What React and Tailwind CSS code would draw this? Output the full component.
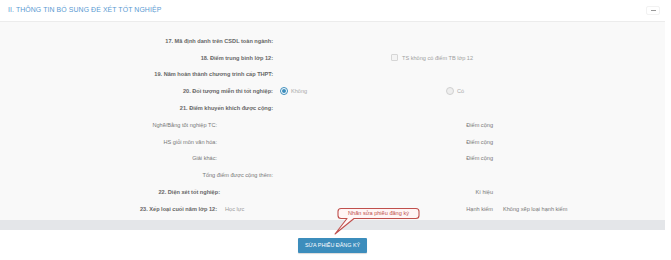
import React from 'react';

const Label = ({ children, bold, w = 'w-[273px]' }) => (
  <div className={`${w} shrink-0 text-right ${bold ? 'font-bold text-[#666]' : 'text-[#777]'}`}>{children}</div>
);

const Row = ({ children }) => (
  <div className="flex items-center h-[16.8px]">{children}</div>
);

const App = () => {
  return (
    <div className="relative w-[671px] h-[260px] bg-white" style={{ fontFamily: '"Liberation Sans", Arial, sans-serif' }}>
      <div className="w-[665px]">
        {/* panel header */}
        <div className="h-[22px] bg-white border-b border-[#ececec] flex items-center justify-between pl-[8px] pr-[5px]">
          <span className="text-[6.9px] text-[#5a9ad2] tracking-[0.1px]">II. THÔNG TIN BỔ SUNG ĐỂ XÉT TỐT NGHIỆP</span>
          <span className="w-[14px] h-[9px] flex items-center justify-center rounded-[2px] border border-[#f2f2f2]">
            <span className="block w-[5px] h-[1px] bg-[#999]" />
          </span>
        </div>

        {/* panel body */}
        <div className="bg-[#f9f9f9] pt-[10.6px] pb-[2.6px] text-[5.6px]">
          <Row>
            <Label bold>17. Mã định danh trên CSDL toàn ngành:</Label>
          </Row>
          <Row>
            <Label bold>18. Điểm trung bình lớp 12:</Label>
            <div className="ml-[118px] flex items-center">
              <span className="w-[7px] h-[7px] border border-[#d6d6d6] bg-[#f4f4f4] rounded-[1px]" />
              <span className="ml-[4px] text-[#a0a0a0]">TS không có điểm TB lớp 12</span>
            </div>
          </Row>
          <Row>
            <Label bold>19. Năm hoàn thành chương trình cấp THPT:</Label>
          </Row>
          <Row>
            <Label bold>20. Đối tượng miễn thi tốt nghiệp:</Label>
            <div className="ml-[7px] flex items-center w-[166px]">
              <span className="w-[8px] h-[8px] rounded-full border border-[#3c8dbc] bg-white flex items-center justify-center">
                <span className="w-[4px] h-[4px] rounded-full bg-[#3c8dbc]" />
              </span>
              <span className="ml-[3px] text-[#aaa]">Không</span>
            </div>
            <div className="flex items-center">
              <span className="w-[8px] h-[8px] rounded-full border border-[#d0d0d0] bg-[#eee]" />
              <span className="ml-[3px] text-[#aaa]">Có</span>
            </div>
          </Row>
          <Row>
            <Label bold>21. Điểm khuyến khích được cộng:</Label>
          </Row>
          <Row>
            <Label w="w-[217px]">Nghề/Bằng tốt nghiệp TC:</Label>
            <div className="w-[276px] shrink-0 text-right text-[#777]">Điểm cộng</div>
          </Row>
          <Row>
            <Label w="w-[217px]">HS giỏi môn văn hóa:</Label>
            <div className="w-[276px] shrink-0 text-right text-[#777]">Điểm cộng</div>
          </Row>
          <Row>
            <Label w="w-[217px]">Giải khác:</Label>
            <div className="w-[276px] shrink-0 text-right text-[#777]">Điểm cộng</div>
          </Row>
          <Row>
            <Label>Tổng điểm được cộng thêm:</Label>
          </Row>
          <Row>
            <Label bold w="w-[220px]">22. Diện xét tốt nghiệp:</Label>
            <div className="w-[273px] shrink-0 text-right text-[#777]">Kí hiệu</div>
          </Row>
          <Row>
            <Label bold w="w-[217px]">23. Xếp loại cuối năm lớp 12:</Label>
            <div className="w-[276px] shrink-0 flex justify-between">
              <span className="ml-[8px] text-[#999]">Học lực</span>
              <span className="text-[#777]">Hạnh kiểm</span>
            </div>
            <span className="ml-[10px] text-[#777]">Không xếp loại hạnh kiểm</span>
          </Row>
        </div>

        <div className="h-[10px] bg-[#e4e6e9]" />

        {/* footer */}
        <div className="flex justify-center pt-[8px]">
          <button className="w-[69px] h-[15px] bg-[#3c8dbc] text-white text-[5.4px] rounded-[1px] shadow-[0_1px_1px_rgba(0,0,0,0.15)]">
            SỬA PHIẾU ĐĂNG KÝ
          </button>
        </div>
      </div>

      {/* callout */}
      <div className="absolute left-[330px] top-[205px] w-[92px] h-[32px]">
        <svg width="92" height="32" viewBox="0 0 92 32" className="absolute left-0 top-0">
          <path
            d="M11 3.5 H86 Q89 3.5 89 6.5 V10.5 Q89 13.5 86 13.5 H24 L5 29 L17 13.5 H11 Q8 13.5 8 10.5 V6.5 Q8 3.5 11 3.5 Z"
            fill="#fff5f5"
            stroke="#c0504d"
            strokeWidth="1.1"
            strokeLinejoin="round"
          />
        </svg>
        <div className="absolute left-[8px] top-[3.5px] w-[81px] h-[10px] flex items-center justify-center text-[5.6px] text-[#c0504d]">
          Nhấn sửa phiếu đăng ký
        </div>
      </div>
    </div>
  );
};

export default App;
